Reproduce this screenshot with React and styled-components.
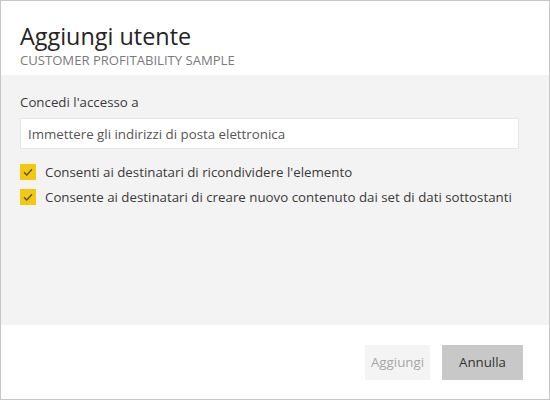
import styled, { createGlobalStyle } from 'styled-components';

const GlobalStyle = createGlobalStyle`
  html, body {
    margin: 0;
    padding: 0;
    background: #ffffff;
  }
  * {
    box-sizing: border-box;
  }
`;

const Dialog = styled.div`
  width: 550px;
  height: 400px;
  border: 1px solid #c6c6c6;
  display: flex;
  flex-direction: column;
  background: #ffffff;
  font-family: 'Segoe UI', 'Open Sans', sans-serif;
  color: #3b3a39;
`;

const Header = styled.div`
  height: 74px;
  padding: 20px 19px 0;
`;

const Title = styled.h1`
  margin: 0;
  font-size: 23.4px;
  font-weight: 400;
  line-height: 31px;
  color: #252423;
`;

const Subtitle = styled.div`
  font-size: 13.1px;
  line-height: 16px;
  color: #7a7a7a;
  text-transform: uppercase;
`;

const Body = styled.div`
  flex: 1;
  background: #f3f3f3;
  padding: 18px 30px 0 19px;
`;

const Label = styled.div`
  font-size: 13.3px;
  line-height: 18px;
  margin-bottom: 7px;
`;

const EmailInput = styled.input`
  display: block;
  width: 100%;
  height: 31px;
  border: 1px solid #e6e6e6;
  background: #ffffff;
  padding: 0 7px;
  font-family: inherit;
  font-size: 13.3px;
  color: #3b3a39;
  outline: none;
  &::placeholder {
    color: #555555;
  }
`;

const Options = styled.div`
  display: flex;
  flex-direction: column;
  gap: 9px;
  margin-top: 15px;
`;

const Option = styled.label`
  display: flex;
  align-items: center;
  gap: 9px;
  font-size: 13.3px;
  line-height: 16px;
`;

const Box = styled.span`
  width: 16px;
  height: 16px;
  flex: none;
  background: ${(props) => (props.checked ? '#f2c811' : '#ffffff')};
  display: flex;
  align-items: center;
  justify-content: center;
`;

const Footer = styled.div`
  height: 74px;
  display: flex;
  justify-content: flex-end;
  align-items: center;
  gap: 12px;
  padding: 0 26px 0 0;
`;

const Button = styled.button`
  height: 35px;
  padding: 0 ${(props) => (props.primary ? '4px' : '16px')};
  min-width: ${(props) => (props.primary ? '65px' : '81px')};
  border: none;
  font-family: inherit;
  font-size: 13.3px;
  background: ${(props) => (props.disabled ? '#f4f4f4' : '#c8c8c8')};
  color: ${(props) => (props.disabled ? '#a6a6a6' : '#333333')};
`;

function Check() {
  return (
    <svg width="10" height="8" viewBox="0 0 10 8">
      <path d="M1 4.2 L3.8 7 L9 1.2" fill="none" stroke="#5a4a1a" strokeWidth="1.3" />
    </svg>
  );
}

function CheckOption({ checked, children }) {
  return (
    <Option>
      <Box checked={checked}>{checked ? <Check /> : null}</Box>
      {children}
    </Option>
  );
}

function App() {
  return (
    <Dialog>
      <GlobalStyle />
      <Header>
        <Title>Aggiungi utente</Title>
        <Subtitle>Customer Profitability Sample</Subtitle>
      </Header>
      <Body>
        <Label>Concedi l'accesso a</Label>
        <EmailInput placeholder="Immettere gli indirizzi di posta elettronica" />
        <Options>
          <CheckOption checked>Consenti ai destinatari di ricondividere l'elemento</CheckOption>
          <CheckOption checked>
            Consente ai destinatari di creare nuovo contenuto dai set di dati sottostanti
          </CheckOption>
        </Options>
      </Body>
      <Footer>
        <Button primary disabled>
          Aggiungi
        </Button>
        <Button>Annulla</Button>
      </Footer>
    </Dialog>
  );
}

export default App;
